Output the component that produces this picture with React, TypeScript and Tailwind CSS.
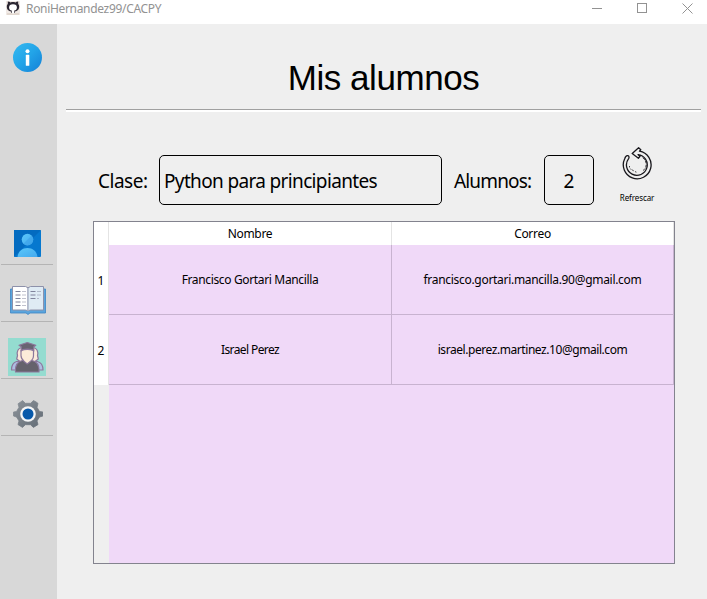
import type { ReactNode } from 'react';

const ui = "font-['Noto_Sans','Open_Sans',sans-serif]";

function InfoIcon() {
  return (
    <svg width="30" height="30" viewBox="0 0 30 30">
      <defs>
        <linearGradient id="info" x1="0" y1="0" x2="1" y2="1">
          <stop offset="0" stopColor="#36baf0" />
          <stop offset="0.5" stopColor="#22a4e8" />
          <stop offset="1" stopColor="#147fd6" />
        </linearGradient>
      </defs>
      <circle cx="15.500" cy="14.500" r="14.500" fill="url(#info)" />
      <circle cx="15.500" cy="8.200" r="2" fill="#fff" />
      <rect x="13.800" y="11.800" width="3.500" height="11" rx="0.600" fill="#fff" />
    </svg>
  );
}

function PersonIcon() {
  return (
    <svg width="27" height="27" viewBox="0 0 27 27">
      <defs>
        <linearGradient id="person" x1="0" y1="0" x2="1" y2="1">
          <stop offset="0" stopColor="#5cc8fa" />
          <stop offset="1" stopColor="#43a9ee" />
        </linearGradient>
      </defs>
      <rect width="27" height="27" rx="1" fill="#0678cf" />
      <path d="M0 0h27L0 27z" fill="#036bc0" />
      <circle cx="13.5" cy="9.6" r="5.8" fill="url(#person)" />
      <path d="M3.5 27c.6-5.500 4.500-9 10-9s9.400 3.500 10 9z" fill="url(#person)" />
      <path d="M9.400 13.700 17.600 5.500a5.800 5.800 0 0 1-8.200 8.200z" fill="#379ce5" opacity="0.5" />
    </svg>
  );
}

function BookIcon() {
  return (
    <svg className="-mt-px ml-px" width="36" height="30" viewBox="0 0 36 30">
      <path d="M.5 4h35v24H20l-2 1.500-2-1.500H.5z" fill="#5ba5dd" stroke="#3d85c4" strokeWidth="0.8" />
      <path d="M2.500 1.500h13l2.500 1.300v23L15.500 25h-13z" fill="#fff" stroke="#8d91aa" />
      <path d="M33.500 1.500h-13L18 2.800v23l2.500-.8h13z" fill="#dfebf4" stroke="#8d91aa" />
      <path d="M18 3v23" stroke="#c2cddb" strokeWidth="0.8" />
      <g stroke="#81849c" strokeWidth="1.100">
        <path d="M5.500 6.500h5m2 0h1m1 0h1M5.500 10h5m2 0h1m1 0h1M5.500 13.500h5m2 0h1m1 0h1M5.500 17h5m2 0h1m1 0h1M5.500 20.500h5m2 0h1m1 0h1" />
        <path d="M20.500 6.500h5m2 0h1m1 0h1M20.500 10h5m2 0h1m1 0h1M20.500 13.500h5m2 0h1" />
      </g>
    </svg>
  );
}

function StudentsIcon() {
  return (
    <svg className="-mt-[2px]" width="38" height="38" viewBox="0 0 38 38">
      <rect width="38" height="38" fill="#94dcd0" />
      <g stroke="#8c789c" strokeWidth="1.200" strokeLinejoin="round">
        <path d="M3.500 32c0-5 1.500-7.500 5-8.500h21c4 1 5.500 3.500 5.500 8.500z" fill="#aebee2" />
        <path d="M14 9.500c-4 .5-5.500 4-4.500 8L8.700 21l4 3H16zM25 9.500c4 .5 5.500 4 4.500 8l.8 3.500-4 3H23z" fill="#fbeadb" />
        <path d="M7.500 34c-.5-6 1.500-10.500 7-11.500h9.500c5.500 1 7.500 5.500 7 11.500H7.500z" fill="#65626c" />
        <path d="M13 12.500c4-1.500 8.500-1.500 12.500 0v5c0 3.500-1.800 5-3.500 6.200l-2.800 2.300-2.700-2.300c-1.500-1.200-3.500-2.700-3.500-6.200z" fill="#fcebd9" />
        <path d="m11 7.300 8.300-2.800 8.500 2.800-2 1.400v4.300c-1-1.700-3-2-6.300-2s-5.300.3-6.300 2V8.700z" fill="#686472" />
      </g>
    </svg>
  );
}

function GearIcon() {
  return (
    <svg className="-mt-px ml-px" width="30" height="30" viewBox="0 0 30 30">
      <defs>
        <linearGradient id="gear" gradientUnits="userSpaceOnUse" x1="3" y1="3" x2="27" y2="27">
          <stop offset="0" stopColor="#899097" />
          <stop offset="1" stopColor="#666f78" />
        </linearGradient>
      </defs>
      <path
        d="M7.200 3.300 9.600 1.600 12.400 4.300h5.200l2.800-2.700 2.400 1.100 2.200 1.700-1 3.900 2.500 4.200 3.400.5v4l-3.400 1-2.500 3.900 1 3.700-4.600 2.800-2.900-2.700h-5.100l-2.900 2.700L5 25.600l1-3.700-2.500-3.900-3-1v-4l3-.5L6 8.300 5 4.800z"
        fill="url(#gear)"
        stroke="url(#gear)"
        strokeWidth="0.800"
        strokeLinejoin="round"
      />
      <circle cx="15" cy="15" r="7.800" fill="#f4f5f6" />
      <circle cx="15" cy="15" r="5.500" fill="#0759aa" />
    </svg>
  );
}

function RefreshIcon() {
  return (
    <svg width="32" height="34" viewBox="0 0 32 34" fill="none" stroke="#18171c" strokeWidth="1.300" strokeLinejoin="round" strokeLinecap="round">
      <path d="M10.200 6.500 16.600.8l2.200 1.900-1.300 1.500A13.900 13.900 0 1 1 2.700 11.800C3.400 9.300 4.500 8.300 5.800 8.600c1.400.4 1.500 1.700.8 3A10.400 10.400 0 1 0 16 7.600l2 1.800-1.600 1.800z" />
      <path d="M21 11c2.200 1.700 3.200 3.800 3.200 6.500 0 2.500-1 4.500-2.700 5.700" strokeWidth="0.900" strokeDasharray="2 2" />
      <path d="M7.500 19.500v.5M8.700 22l.2.300M10.700 23l.5.800M13.500 24.800l.5.200" strokeWidth="0.900" />
    </svg>
  );
}

function NavItem({ children }: { children: ReactNode }) {
  return <div className="flex h-[57px] w-[52px] items-center justify-center border-b border-[#b4b4b4] pt-[15px]">{children}</div>;
}

function Student({ number, name, email }: { number: number; name: ReactNode; email: ReactNode }) {
  return (
    <div className="flex h-[70px] text-[12px] leading-[16px]">
      <div className="flex w-[15px] shrink-0 items-center justify-center border-r border-[#e4e4e4] bg-white pt-[2px]">{number}</div>
      <div className="flex w-[283px] shrink-0 items-center justify-center border-r border-b border-[#c8b3d0] pt-px">{name}</div>
      <div className="flex w-[282px] shrink-0 items-center justify-center border-r border-b border-[#c8b3d0] pt-px">{email}</div>
    </div>
  );
}

export default function App() {
  return (
    <div className={`flex h-[599px] w-[707px] flex-col overflow-hidden bg-[#efefef] text-black ${ui}`}>
      <header className="flex h-6 shrink-0 items-start bg-white text-[#929292]">
        <svg className="mt-px ml-[6px]" width="14" height="14" viewBox="0 0 14 14">
          <rect width="14" height="14" fill="#f0e9e5" />
          <path d="M1 12.500h12v1H1z" fill="#d5c6ba" />
          <path d="M5.200 12v-1.500C1.800 10 .8 8 .8 5.600c0-1.200.4-2 1-2.600V.5c1.200 0 2 .3 2.800.9 1.500-.4 3.300-.4 4.800 0C10.200.8 11 .5 12.200.5V3c.6.600 1 1.400 1 2.600 0 2.400-1 4.400-4.400 4.900V12z" fill="#2b2631" />
          <ellipse cx="7" cy="6.400" rx="3.900" ry="3.200" fill="#fff" />
          <path d="M5.800 9h2.400v3.500H5.800z" fill="#fff" />
        </svg>
        <span className="ml-[6px] text-[12px] leading-[18px] tracking-[-0.320px] whitespace-nowrap">RoniHernandez99/CACPY</span>
        <div className="mr-[14px] ml-auto flex h-[16px] items-center gap-[35px]">
          <div className="mt-px h-px w-[10px] bg-[#929292]" />
          <div className="h-[10px] w-[10px] border border-[#929292]" />
          <svg width="11" height="11" viewBox="0 0 11 11"><path d="m.5.5 10 10m0-10-10 10" stroke="#929292" /></svg>
        </div>
      </header>
      <div className="flex min-h-0 flex-1">
        <nav className="w-[57px] shrink-0 bg-[#d8d8d8] pl-px">
          <div className="mb-[135px] h-[49px] pt-[19px] pl-[11px]"><InfoIcon /></div>
          <NavItem><PersonIcon /></NavItem>
          <NavItem><BookIcon /></NavItem>
          <NavItem><StudentsIcon /></NavItem>
          <NavItem><GearIcon /></NavItem>
        </nav>
        <main className="flex-1">
          <div className="mr-[6px] ml-[9px] h-[88px] border-b-2 border-white">
            <h1 className="h-[86px] border-b border-[#a0a0a0] pt-[34px] text-center font-['Liberation_Sans',Arial,sans-serif] text-[35px] leading-[40px] tracking-[-0.450px]">Mis alumnos</h1>
          </div>
          <div className="flex h-[109px] text-[19px] leading-[26px] tracking-[-0.650px]">
            <span className="mt-[56px] ml-[41px] w-[61px] shrink-0 tracking-[-0.500px] whitespace-nowrap">Clase:</span>
            <div className="mt-[43px] flex h-[50px] w-[283px] shrink-0 items-center rounded-[5px] border border-black pt-[2px] pl-[4px] whitespace-nowrap">Python para principiantes</div>
            <span className="mt-[56px] ml-[12px] w-[90px] shrink-0 tracking-[-0.850px] whitespace-nowrap">Alumnos:</span>
            <div className="mt-[43px] flex h-[50px] w-[50px] shrink-0 items-center justify-center rounded-[5px] border border-black pt-[2px] tracking-normal">2</div>
            <div className="mt-[35px] ml-[22px] flex w-[44px] flex-col items-center tracking-normal">
              <RefreshIcon />
              <span className="mt-[12px] -ml-[2px] text-[8px] leading-[10px] tracking-[-0.100px]">Refrescar</span>
            </div>
          </div>
          <section className="ml-[36px] flex h-[343px] w-[582px] flex-col border border-[#83838e] bg-[#f0d9f8]">
            <div className="flex h-[23px] shrink-0 bg-white text-[12px] leading-[24px]">
              <div className="w-[15px] border-r border-[#e4e4e4]" />
              <div className="w-[283px] border-r border-[#e4e4e4] text-center tracking-[-0.300px]">Nombre</div>
              <div className="w-[282px] border-r border-[#e4e4e4] text-center tracking-[-0.300px]">Correo</div>
            </div>
            <Student number={1} name={<span className="tracking-[-0.350px]">Francisco Gortari Mancilla</span>} email={<span className="tracking-[-0.300px]">francisco.gortari.mancilla.90@gmail.com</span>} />
            <Student number={2} name={<span className="tracking-[-0.600px]">Israel Perez</span>} email={<span className="tracking-[-0.440px]">israel.perez.martinez.10@gmail.com</span>} />
            <div className="w-[15px] flex-1 bg-[#efefef]" />
          </section>
        </main>
      </div>
    </div>
  );
}
